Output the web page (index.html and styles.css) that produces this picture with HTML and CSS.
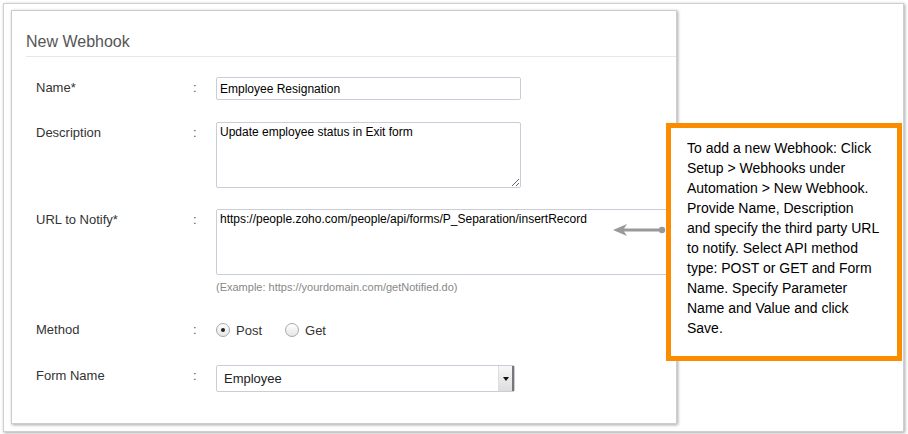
FILE: index.html
```html
<!DOCTYPE html>
<html lang="en">
<head>
  <meta charset="UTF-8" />
  <title>New Webhook</title>
  <link rel="stylesheet" href="styles.css">
</head>
<body>

<div class="frame">
  <div class="panel">
    <div class="panel-head">New Webhook</div>

    <div class="form">
      <div class="row row-name">
        <label class="label">Name*</label>
        <span class="colon">:</span>
        <input class="field field-name" type="text" value="Employee Resignation" />
      </div>

      <div class="row row-desc">
        <label class="label">Description</label>
        <span class="colon">:</span>
        <textarea class="field field-desc">Update employee status in Exit form</textarea>
      </div>

      <div class="row row-url">
        <label class="label">URL to Notify*</label>
        <span class="colon">:</span>
        <div>
          <textarea class="field field-url">https://people.zoho.com/people/api/forms/P_Separation/insertRecord</textarea>
          <div class="hint">(Example: https://yourdomain.com/getNotified.do)</div>
        </div>
      </div>

      <div class="row row-method">
        <label class="label">Method</label>
        <span class="colon">:</span>
        <div class="radios">
          <span class="radio checked"></span><span class="radio-text">Post</span>
          <span class="radio"></span><span class="radio-text">Get</span>
        </div>
      </div>

      <div class="row row-form">
        <label class="label">Form Name</label>
        <span class="colon">:</span>
        <div class="select">
          <span class="select-value">Employee</span>
          <span class="select-btn"><span class="caret"></span></span>
        </div>
      </div>
    </div>
  </div>

  <!-- callout -->
  <svg class="arrow" width="54" height="16" viewBox="0 0 54 16">
    <path d="M0 8 L14 2 L11 6.5 L48 6.5 L48 9.5 L11 9.5 L14 14 Z" fill="#999" />
    <circle cx="49" cy="8" r="3.2" fill="#999" />
  </svg>
  <div class="note">
    To add a new Webhook: Click Setup &gt; Webhooks under Automation &gt; New Webhook. Provide Name, Description and specify the third party URL to notify. Select API method type: POST or GET and Form Name. Specify Parameter Name and Value and click Save.
  </div>
</div>

</body>
</html>
```

FILE: styles.css
```css
body {
  margin: 0;
  padding: 0;
  background: #fff;
  font-family: 'Liberation Sans', Arial, sans-serif;
}
.frame {
  position: relative;
  box-sizing: border-box;
  width: 901px;
  height: 429px;
  margin: 3px;
  padding: 6px 0 0 7px;
  background: #fff;
  border: 1px solid #cfcfcf;
  box-shadow: 1px 1px 3px rgba(0,0,0,0.35);
}
.panel {
  box-sizing: border-box;
  width: 666px;
  height: 414px;
  border: 1px solid #cdcdcd;
  box-shadow: 1px 1px 3px rgba(0,0,0,0.35);
  background: #fff;
}
.panel-head {
  margin-left: 14px;
  padding: 21px 0 4px;
  font-size: 16px;
  line-height: 20px;
  color: #555;
  border-bottom: 1px solid #e4e7eb;
}
.form {
  padding: 20px 0 0 24px;
}
.row {
  display: grid;
  grid-template-columns: 157px 23px 1fr;
  align-items: start;
}
.label, .colon {
  font-size: 13px;
  line-height: 22px;
  color: #333;
}
.colon {
  color: #555;
}
.row-desc { margin-top: 22px; }
.row-url { margin-top: 21px; }
.row-method { margin-top: 25px; }
.row-form { margin-top: 24px; }

.field {
  box-sizing: border-box;
  display: block;
  margin: 0;
  border: 1px solid #c8cdd8;
  border-radius: 2px;
  font-family: 'Liberation Sans', Arial, sans-serif;
  font-size: 12px;
  color: #000;
  background: #fff;
  outline: none;
}
.field-name {
  width: 305px;
  height: 23px;
  padding: 0 3px;
}
.field-desc {
  width: 305px;
  height: 66px;
  padding: 2px 3px;
  line-height: 15px;
  resize: both;
}
.field-url {
  width: 458px;
  height: 66px;
  padding: 2px 3px;
  line-height: 15px;
  resize: none;
}
.hint {
  margin-top: 5px;
  font-size: 11px;
  line-height: 14px;
  color: #888;
}
.radios {
  display: flex;
  align-items: center;
  height: 22px;
  font-size: 13px;
  color: #333;
}
.radio {
  box-sizing: border-box;
  width: 14px;
  height: 14px;
  border-radius: 50%;
  border: 1px solid #a8a8a8;
  background: linear-gradient(#fff, #e6e6e6);
  display: flex;
  align-items: center;
  justify-content: center;
}
.radio.checked::after {
  content: "";
  width: 4px;
  height: 4px;
  border-radius: 50%;
  background: #222;
}
.radio-text {
  margin: 0 23px 0 6px;
}
.select {
  box-sizing: border-box;
  width: 299px;
  height: 27px;
  display: flex;
  align-items: center;
  border: 1px solid #c8cdd8;
  border-radius: 2px;
  background: #fff;
}
.select-value {
  flex: 1;
  padding-left: 7px;
  font-size: 13px;
  color: #222;
}
.select-btn {
  width: 13px;
  height: 25px;
  display: flex;
  align-items: center;
  justify-content: center;
  border-left: 1px solid #ddd;
  border-right: 2px solid #777;
  background: linear-gradient(#f8f8f8, #dcdcdc);
}
.caret {
  width: 0;
  height: 0;
  border-left: 3px solid transparent;
  border-right: 3px solid transparent;
  border-top: 4px solid #111;
}

.arrow {
  position: absolute;
  left: 609px;
  top: 218px;
}
.note {
  position: absolute;
  left: 662px;
  top: 119px;
  box-sizing: border-box;
  width: 236px;
  height: 238px;
  padding: 10px 17px 0 16px;
  border: 5px solid #fb8c00;
  background: #fff;
  font-size: 14px;
  line-height: 20px;
  color: #000;
}
```
